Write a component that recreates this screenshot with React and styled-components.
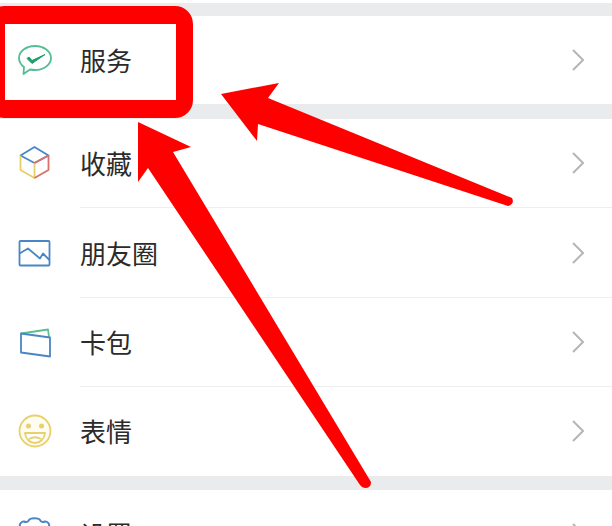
import React from 'react';
import styled, { createGlobalStyle } from 'styled-components';

const GlobalStyle = createGlobalStyle`
  html, body {
    margin: 0;
    padding: 0;
    height: 526px;
    overflow: hidden;
    background: #fff;
  }
`;

const Page = styled.div`
  position: relative;
  width: 612px;
  height: 526px;
  overflow: hidden;
  background: #fff;
  padding-top: 3px;
  box-sizing: border-box;
  font-family: "Noto Sans CJK SC", "Noto Sans", sans-serif;
`;

const Band = styled.div`
  height: ${(p) => p.$h || 14.6}px;
  background: #e9ebec;
`;

const Group = styled.div`
  background: #fff;
`;

const Row = styled.div`
  display: flex;
  align-items: center;
  height: 88.4px;
  padding: 0 28px 0 18px;
  box-sizing: border-box;
`;

const IconBox = styled.div`
  width: 34px;
  height: 34px;
  flex: none;
  margin-right: 28px;
  svg {
    display: block;
    overflow: visible;
  }
`;

const Label = styled.div`
  flex: 1;
  font-size: 26px;
  line-height: 34px;
  color: #2b2b2b;
`;

const Divider = styled.div`
  height: 1px;
  margin-left: 80px;
  background: #eeeeee;
`;

const RedBox = styled.div`
  position: absolute;
  left: -14px;
  top: 6px;
  width: 207px;
  height: 112px;
  box-sizing: border-box;
  border: 18px solid #ff0000;
  border-width: 18px 17px 18px 19px;
  border-radius: 18px;
`;

const ArrowLayer = styled.svg`
  position: absolute;
  left: 0;
  top: 0;
`;

const Chevron = () => (
  <svg width="12" height="22" viewBox="0 0 12 22">
    <path d="M1 1 L11 11 L1 21" fill="none" stroke="#b4b6b7" strokeWidth="2" />
  </svg>
);

const ServiceIcon = () => (
  <svg width="34" height="34" viewBox="0 0 34 34">
    <path
      d="M17 3C8 3 1 8.400 1 15C1 18.800 3 21.800 6 24L5.500 31L12 26.500C13.500 26.800 15.200 27 17 27C26 27 33 21.600 33 15C33 8.400 26 3 17 3Z"
      fill="none"
      stroke="#54bf95"
      strokeWidth="1.800"
      strokeLinejoin="round"
    />
    <path d="M9 15.500L14 20.500L27 11.500L14 17.500L11 14Z" fill="#1f9d6b" stroke="#1f9d6b" strokeWidth="1" strokeLinejoin="round" />
  </svg>
);

const CubeIcon = () => (
  <svg width="34" height="34" viewBox="0 0 34 34" fill="none" strokeWidth="1.800" strokeLinejoin="round">
    <path d="M2.500 9.500L16.500 1L30.500 9.500L16.500 17Z" stroke="#4a86c5" />
    <path d="M2.500 9.500V24L16.500 32V17" stroke="#e9cf6a" />
    <path d="M30.500 9.500V24L16.500 32" stroke="#d9706a" />
    <path d="M16.500 17L30.500 9.500" stroke="#d9706a" />
  </svg>
);

const MomentsIcon = () => (
  <svg width="34" height="34" viewBox="0 0 34 34" fill="none" stroke="#4a86c5" strokeWidth="1.800" strokeLinejoin="round">
    <rect x="1.500" y="5" width="30" height="24.500" rx="1" />
    <path d="M1.500 17.500L10 12.500L22 22.500L25 17.500L31.500 24" />
  </svg>
);

const WalletIcon = () => (
  <svg width="34" height="34" viewBox="0 0 34 34" fill="none" strokeWidth="1.800" strokeLinejoin="round">
    <path d="M3 8.500L30 4.500L31 12" stroke="#5cbf8f" />
    <path d="M3 8.500L32 12.500V31.500L3 27.500Z" stroke="#4a86c5" />
  </svg>
);

const SmileIcon = () => (
  <svg width="34" height="34" viewBox="0 0 34 34" fill="none" stroke="#e8d06a" strokeWidth="1.800">
    <circle cx="17" cy="17" r="15.500" fill="#fffdf2" />
    <circle cx="10.500" cy="12" r="2.500" fill="#e8d06a" stroke="none" />
    <circle cx="23.500" cy="12" r="2.500" fill="#e8d06a" stroke="none" />
    <path d="M7 19H27C26.500 25 22 29 17 29C12 29 7.500 25 7 19Z" fill="#fff" strokeLinejoin="round" />
    <path d="M11 25Q17 21.500 23 25" />
  </svg>
);

const GearIcon = () => (
  <svg width="34" height="34" viewBox="0 0 34 34" fill="none" stroke="#4a86c5" strokeWidth="2" strokeLinejoin="round">
    <path d="M11 3C12 0.500 21 0.500 22 3C23 5 25 5.500 27 4.500C29 4 32 7 31 9C30 11 31 13 33 14C34 15 34 19 33 20C31 21 30 23 31 25C32 27 29 30 27 29.500C25 28.500 23 29 22 31C21 33.500 12 33.500 11 31C10 29 8 28.500 6 29.500C4 30 1 27 2 25C3 23 2 21 0 20C-1 19 -1 15 0 14C2 13 3 11 2 9C1 7 4 4 6 4.500C8 5.500 10 5 11 3Z" />
    <circle cx="16.500" cy="17" r="5" />
  </svg>
);

const firstGroup = [{ label: '服务', icon: <ServiceIcon /> }];
const secondGroup = [
  { label: '收藏', icon: <CubeIcon /> },
  { label: '朋友圈', icon: <MomentsIcon /> },
  { label: '卡包', icon: <WalletIcon /> },
  { label: '表情', icon: <SmileIcon /> },
];
const thirdGroup = [{ label: '设置', icon: <GearIcon /> }];

function MenuGroup({ items }) {
  return (
    <Group>
      {items.map((item, i) => (
        <React.Fragment key={item.label}>
          {i > 0 && <Divider />}
          <Row>
            <IconBox>{item.icon}</IconBox>
            <Label>{item.label}</Label>
            <Chevron />
          </Row>
        </React.Fragment>
      ))}
    </Group>
  );
}

export default function App() {
  return (
    <Page>
      <GlobalStyle />
      <Band $h={13} />
      <MenuGroup items={firstGroup} />
      <Band />
      <MenuGroup items={secondGroup} />
      <Band />
      <MenuGroup items={thirdGroup} />

      <RedBox />
      <ArrowLayer width="612" height="526" viewBox="0 0 612 526">
        <path
          d="M221 94L279 83L268 98L512 198Q515 204 508 206L258 124L257 141Z"
          fill="#ff0000"
        />
        <path
          d="M138 122L191 147L173 152L371 482Q371 488 365 488Q362 488 360 485L148 168L138 182Z"
          fill="#ff0000"
        />
      </ArrowLayer>
    </Page>
  );
}
